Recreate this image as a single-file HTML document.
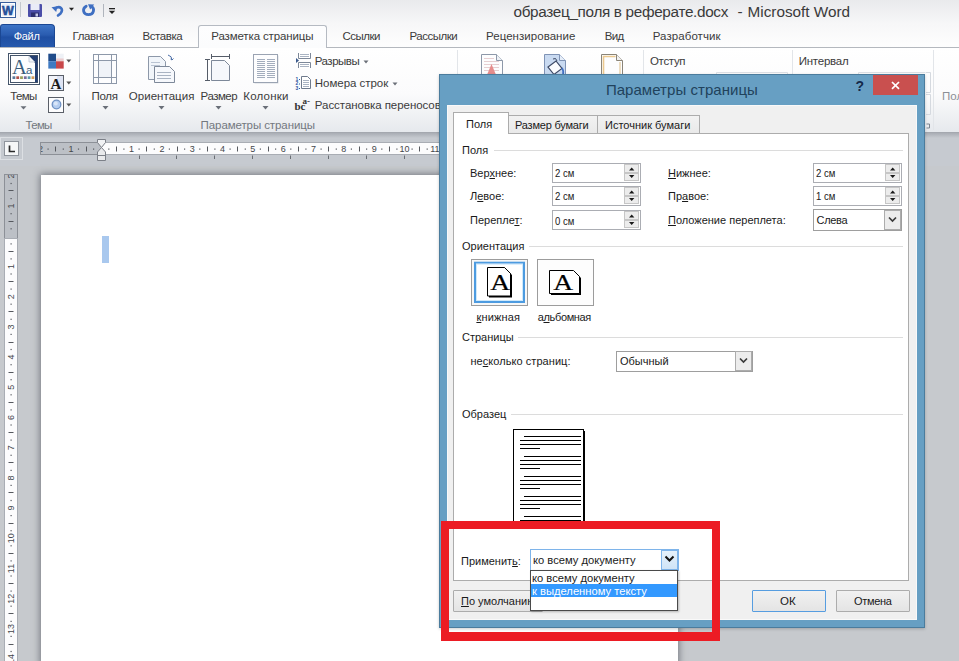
<!DOCTYPE html>
<html lang="ru"><head><meta charset="utf-8"><title>Параметры страницы</title>
<style>
*{box-sizing:border-box;margin:0;padding:0}
html,body{width:959px;height:661px;overflow:hidden;background:#c6c9cd}
body{position:relative;font-family:"Liberation Sans",sans-serif;font-size:11px;color:#1e1e1e}
.a{position:absolute}
.t{position:absolute;white-space:nowrap;line-height:1}
/* ---- word window ---- */
#titlebar{left:0;top:0;width:959px;height:24px;background:linear-gradient(#e9eaec,#f7f7f8)}
#tabrow{left:0;top:24px;width:959px;height:24px;background:linear-gradient(#f7f7f8,#fefefe)}
#ribbon{left:0;top:47px;width:959px;height:86px;background:linear-gradient(#ffffff 0%,#fbfbfc 55%,#e6e9ed 100%);border-top:1px solid #b4b8be;border-bottom:1px solid #a4a8af}
#rulerband{left:0;top:133px;width:959px;height:33px;background:linear-gradient(#a9adb4 0,#c6cad0 5px,#c6cad0 100%)}
#docbg{left:0;top:166px;width:959px;height:495px;background:#c6c9cd}
#page{left:41px;top:175px;width:637px;height:490px;background:#fff;box-shadow:0 0 7px 1px rgba(60,65,75,.6)}
.wt{font-size:15.3px;color:#3a3a3a}
.rt{font-size:11.5px;color:#3b3b3b}
</style></head><body>
<div class="a" id="titlebar"></div>
<div class="a" id="tabrow"></div>
<div class="a" id="ribbon"></div>
<div class="a" id="rulerband"></div>
<div class="a" id="docbg"></div>
<div class="a" id="page"></div>
<!--RIBBON-START-->
<!-- quick access toolbar -->
<svg class="a" style="left:0;top:0" width="120" height="24" viewBox="0 0 120 24">
  <rect x="0.5" y="2.5" width="15" height="15" fill="#e9f0fa" stroke="#3a5f9c"/>
  <rect x="1.5" y="3.5" width="13" height="13" fill="none" stroke="#fff" stroke-width="1"/>
  <text x="8" y="15" font-family="Liberation Sans,sans-serif" font-weight="bold" font-size="12.5" text-anchor="middle" fill="#2a57a5" stroke="#1d4489" stroke-width=".5">W</text>
  <rect x="20" y="2" width="1" height="15" fill="#c4c8ce"/>
  <!-- save -->
  <rect x="28" y="4" width="14" height="13" rx="1" fill="#4b4ea8"/>
  <rect x="30.5" y="4" width="9" height="6" fill="#e9ebf7"/>
  <rect x="31" y="12.5" width="8" height="4.5" fill="#2c2f6e"/>
  <rect x="35.5" y="13.5" width="2.5" height="3" fill="#c6c9ea"/>
  <!-- undo -->
  <path d="M51.5 7.2 L57.5 6.2 L56.2 12 Z" fill="#3f6fc2"/>
  <path d="M55 8.5 C60 5 64 9 60.5 13.5 L58 15.5" fill="none" stroke="#3f6fc2" stroke-width="2.6" stroke-linecap="round"/>
  <path d="M69 7.8 h5 l-2.5 3 z" fill="#222"/>
  <!-- redo -->
  <path d="M86.2 6.2 C82 8.5 82.8 14.5 88.5 14.7 C94 14.5 95 8.5 91.5 6.5" fill="none" stroke="#3f6fc2" stroke-width="2.8" stroke-linecap="round"/>
  <path d="M88 4.2 L94.2 4.6 L90.2 9.6 Z" fill="#3f6fc2"/>
  <rect x="103" y="4" width="1" height="13" fill="#b0b5bd"/>
  <rect x="109" y="8" width="6" height="1.3" fill="#222"/>
  <path d="M108.8 10.8 h6.4 l-3.2 3.2 z" fill="#222"/>
</svg>
<div class="t wt" style="left:513.5px;top:4px;letter-spacing:-.33px" id="wt1">образец_поля в реферате.docx</div>
<div class="t wt" style="left:737.5px;top:4px" id="wt2">-</div>
<div class="t wt" style="left:747.5px;top:4px" id="wt3">Microsoft Word</div>
<!-- tabs -->
<div class="a" style="left:0;top:24px;width:55px;height:23px;border-radius:3px 4px 0 0;background:linear-gradient(#3d74c6 0%,#2a5cb0 45%,#1f4fa3 55%,#2659ad 100%);border:1px solid #1b4793;border-bottom:0"></div>
<div class="t rt" style="left:13.7px;top:31px;color:#fff;font-size:11px;letter-spacing:-0.312px" id="tFile">Файл</div>
<div class="a" style="left:198px;top:25px;width:129px;height:23px;border:1px solid #b5bac2;border-bottom:0;border-radius:3px 3px 0 0;background:linear-gradient(#fdfdfe,#fbfcfd)"></div>
<div class="t rt" style="left:72.5px;top:31px;letter-spacing:-0.369px" id="t1">Главная</div>
<div class="t rt" style="left:142.5px;top:31px;letter-spacing:-0.436px" id="t2">Вставка</div>
<div class="t rt" style="left:211.3px;top:31px;letter-spacing:-0.137px" id="t3">Разметка страницы</div>
<div class="t rt" style="left:342.5px;top:31px;letter-spacing:-0.500px" id="t4">Ссылки</div>
<div class="t rt" style="left:409.5px;top:31px;letter-spacing:-0.491px" id="t5">Рассылки</div>
<div class="t rt" style="left:486px;top:31px;letter-spacing:0.042px" id="t6">Рецензирование</div>
<div class="t rt" style="left:604.7px;top:31px;letter-spacing:-0.604px" id="t7">Вид</div>
<div class="t rt" style="left:652.7px;top:31px;letter-spacing:0.084px" id="t8">Разработчик</div>
<!-- ribbon big buttons -->
<svg class="a" style="left:0;top:48px" width="480" height="86" viewBox="0 48 480 86">
  <!-- Themes icon -->
  <rect x="8.500" y="53.500" width="31" height="31" fill="#fff" stroke="#44546a"/>
  <rect x="10.500" y="55.500" width="27" height="27" fill="#fdfdfe" stroke="#44546a"/>
  <rect x="35" y="56" width="2.500" height="26" fill="#243f73"/>
  <path d="M29 56 h8 v7 h-2 z" fill="#243f73"/>
  <path d="M29 56 v6 h6 z" fill="#f4f6fa" stroke="#9aa6bb" stroke-width=".5"/>
  <text x="12" y="73.700" font-family="Liberation Serif,serif" font-size="20.500" fill="#3b5d7c">A</text>
  <text x="26" y="73.700" font-family="Liberation Sans,sans-serif" font-size="11.500" fill="#3b5d7c">a</text>
  <g><rect x="12.500" y="76.300" width="2.800" height="2.700" fill="#5a7a9a"/><rect x="16.300" y="76.300" width="2.800" height="2.700" fill="#b0504a"/><rect x="20.100" y="76.300" width="2.800" height="2.700" fill="#9aa05a"/><rect x="23.900" y="76.300" width="2.800" height="2.700" fill="#7a6a9a"/><rect x="27.700" y="76.300" width="2.800" height="2.700" fill="#5a9aaa"/><rect x="31.500" y="76.300" width="2.800" height="2.700" fill="#d09a5a"/></g>
  <path d="M20.500 106.300 h6 l-3 3.300 z" fill="#6a6f78"/>
  <!-- small theme icons -->
  <rect x="48.300" y="53.700" width="7.700" height="7.500" fill="#1f4b8a"/><rect x="56" y="53.700" width="7.700" height="7.500" fill="#eef1f6"/>
  <rect x="48.300" y="61.200" width="7.700" height="7.400" fill="#3f7ac2"/><rect x="56" y="61.200" width="7.700" height="7.400" fill="#c8474a"/>
  <rect x="56" y="58.500" width="7.700" height="2.700" fill="#e9b5b5" opacity=".6"/>
  <path d="M66.300 59.500 h5 l-2.500 3 z" fill="#555"/>
  <rect x="48.500" y="75.500" width="15" height="15" fill="#f2f4fa" stroke="#5a5f68"/>
  <rect x="57" y="76" width="6" height="14" fill="#dfe4f3"/>
  <text x="56" y="88.500" font-family="Liberation Serif,serif" font-size="15" font-weight="bold" text-anchor="middle" fill="#1a1a1a">A</text>
  <path d="M66.300 81.500 h5 l-2.500 3 z" fill="#555"/>
  <rect x="48.500" y="97.500" width="15" height="15" fill="#fdfdfe" stroke="#5a5f68"/>
  <circle cx="56.500" cy="104.500" r="4.300" fill="#b4cdf0" stroke="#6f92c4" stroke-width="1.300"/>
  <circle cx="55.800" cy="103.500" r="2" fill="#d9e6f8"/>
  <path d="M66.300 103.500 h5 l-2.500 3 z" fill="#555"/>
  <!-- separators -->
  <rect x="79" y="50" width="1" height="80" fill="#d0d4da"/>
  <rect x="457" y="50" width="1" height="80" fill="#e2e5e9"/>
  <!-- Margins icon -->
  <rect x="93.500" y="54.500" width="23" height="29" fill="#fdfdfe" stroke="#8d98a9"/>
  <path d="M98.500 55 v28 M111.500 55 v28 M94 60.500 h22 M94 77.500 h22" stroke="#8d98a9" fill="none"/>
  <rect x="99" y="61" width="12" height="16" fill="#f0f3f8"/>
  <path d="M102.500 106 h6 l-3 3.500 z" fill="#6a6f78"/>
  <!-- Orientation icon -->
  <path d="M148.500 56.500 h12 l5 5 v18 h-17 z" fill="#f1f5fa" stroke="#8d98a9"/><path d="M151 62.500 h9 M151 65.500 h9" stroke="#b9c3d2"/>
  <path d="M154.500 66.500 h15 l5 5 v11 h-20 z" fill="#f6f8fc" stroke="#7d8899"/>
  <path d="M157 72.500 h14 M157 75.500 h14 M157 78.500 h14" stroke="#a9b3c2"/>
  <path d="M168 55 q4 1 4 5 l-1.500 -1 m1.500 1 l1.500 -1.500" stroke="#4b6ea8" fill="none"/>
  <path d="M158.500 106 h6 l-3 3.500 z" fill="#6a6f78"/>
  <!-- Size icon -->
  <path d="M211.500 60.500 h13 l5 5 v15 h-18 z" fill="#f6f8fc" stroke="#7d8899"/>
  <path d="M207.500 59 v22 M205 59.500 h5 M205 80.500 h5 M211 56.500 h19 M211.500 54 v5 M229.500 54 v5" stroke="#555c68" fill="none"/>
  <path d="M215.500 106 h6 l-3 3.500 z" fill="#6a6f78"/>
  <!-- Columns icon -->
  <rect x="254.500" y="55.500" width="24" height="28" fill="#d5d9e0"/><rect x="253.500" y="54.500" width="24" height="28" fill="#fdfdfe" stroke="#9aa3b2"/>
  <path d="M257 59.500 h8 M267 59.500 h8 M257 61.500 h8 M267 61.500 h8 M257 63.500 h8 M267 63.500 h8 M257 65.500 h8 M267 65.500 h8 M257 67.500 h8 M267 67.500 h8 M257 69.500 h8 M267 69.500 h8 M257 71.500 h8 M267 71.500 h8 M257 73.500 h8 M267 73.500 h8 M257 75.500 h8 M267 75.500 h8 M257 77.500 h8 M267 77.500 h8" stroke="#a3adbd"/>
  <path d="M262.500 106 h6 l-3 3.500 z" fill="#6a6f78"/>
  <!-- Breaks icon -->
  <path d="M298.500 53 v5.500 h12 v-5.500 M298.500 68 v-5.500 h12 v5.500" fill="#fff" stroke="#7d8899"/>
  <path d="M300 54.500 h9 M300 56.500 h9 M300 64.500 h9 M300 66.500 h9" stroke="#a9b3c2"/>
  <path d="M296 58 l3 2.500 l-3 2.500 z" fill="#3b5a8c"/>
  <path d="M363.500 60.500 h5 l-2.500 3 z" fill="#6a6f78"/>
  <!-- Line numbers icon -->
  <path d="M301.500 76.500 h6 l3 3 v9 h-9 z" fill="#fff" stroke="#6f7a8c"/>
  <path d="M303 80.500 h6 M303 82.500 h6 M303 84.500 h6 M303 86.500 h6" stroke="#a9b3c2"/>
  <text x="295.500" y="80.500" font-family="Liberation Sans,sans-serif" font-weight="bold" font-size="5" fill="#2f55a0">1</text>
  <text x="295.500" y="85" font-family="Liberation Sans,sans-serif" font-weight="bold" font-size="5" fill="#2f55a0">2</text>
  <text x="295.500" y="89.500" font-family="Liberation Sans,sans-serif" font-weight="bold" font-size="5" fill="#2f55a0">3</text>
  <path d="M299 79.500 h1 M299 84 h1 M299 88.500 h1" stroke="#2f55a0"/>
  <path d="M392.500 82.500 h5 l-2.500 3 z" fill="#6a6f78"/>
  <!-- Hyphenation icon -->
  <text x="294.500" y="109.500" font-family="Liberation Serif,serif" font-weight="bold" font-size="11" fill="#333">bc</text>
  <text x="302.500" y="103.500" font-family="Liberation Serif,serif" font-weight="bold" font-size="9" fill="#333">a-</text>
</svg>
<div class="t rt" style="left:10.3px;top:90.5px;letter-spacing:-0.638px" id="b1">Темы</div>
<div class="t rt" style="left:25.5px;top:120px;color:#73787f;letter-spacing:-0.688px" id="g1">Темы</div>
<div class="t rt" style="left:91.5px;top:90.5px;letter-spacing:-0.290px" id="b2">Поля</div>
<div class="t rt" style="left:128.8px;top:90.5px;letter-spacing:0.040px" id="b3">Ориентация</div>
<div class="t rt" style="left:200.6px;top:90.5px;letter-spacing:-0.489px" id="b4">Размер</div>
<div class="t rt" style="left:243.3px;top:90.5px;letter-spacing:0.201px" id="b5">Колонки</div>
<div class="t rt" style="left:314.8px;top:56px;letter-spacing:-0.496px" id="s1">Разрывы</div>
<div class="t rt" style="left:314.8px;top:78px;letter-spacing:-0.037px" id="s2">Номера строк</div>
<div class="t rt" style="left:314.8px;top:100px;letter-spacing:-0.048px" id="s3">Расстановка переносов</div>
<div class="t rt" style="left:200.6px;top:120px;color:#73787f;letter-spacing:-0.091px" id="g2">Параметры страницы</div>
<!-- right ribbon part -->
<svg class="a" style="left:458px;top:48px" width="501" height="86" viewBox="458 48 501 86">
  <path d="M481.500 54.500 h15 l6 6 v20 h-21 z" fill="#fdfdfe" stroke="#8d98a9"/>
  <path d="M496.500 54.500 v6 h6" fill="#eef1f6" stroke="#8d98a9"/>
  <path d="M484 58.500 h10 M484 61.500 h15 M484 64.500 h15 M484 67.500 h15 M484 70.500 h15" stroke="#e6cfd2"/>
  <path d="M486.500 76 l5 -12 l5 12 z" fill="#e58d8d"/>
  <path d="M544.500 54.500 h15 l6 6 v20 h-21 z" fill="#c9daf1" stroke="#7f93b5"/>
  <path d="M559.500 54.500 v6 h6" fill="#e6eef9" stroke="#7f93b5"/>
  <path d="M548 67 l8 -6 l6 7.500 l-8 6 z" fill="#fbfcfe" stroke="#3d4a66" stroke-width="1.200"/>
  <path d="M553 59 q3 -2 4 2" fill="none" stroke="#3d4a66"/>
  <path d="M562 68 q2 3 1 7" fill="none" stroke="#3f6fc2" stroke-width="1.600"/>
  <path d="M601.500 54.500 h15 l6 6 v20 h-21 z" fill="#fdfdfe" stroke="#8a8478"/>
  <path d="M616.500 54.500 v6 h6" fill="#f1f1f1" stroke="#8a8478"/>
  <path d="M603.500 76 v-19.500 h12" stroke="#ecc98f" stroke-width="1.600" fill="none"/>
  <path d="M620 62 v14" stroke="#e9d3ae" stroke-width="1.500"/>
  <rect x="643" y="50" width="1" height="80" fill="#e2e5e9"/>
  <rect x="792" y="50" width="1" height="80" fill="#e2e5e9"/>
  <rect x="933" y="50" width="1" height="80" fill="#e2e5e9"/>
  <path d="M926 72.500 h4.500 v20 h-4.500 M926 94.500 h4.500 v20 h-4.500" stroke="#d5d9df" fill="none"/>
  <path d="M716.500 74 v-1.500 h71 v1.500 M858.500 74 v-1.500 h67" stroke="#dde0e5" fill="none"/>
  <path d="M926.500 124 h3 M929.500 124 v4 h-3" stroke="#7d8590" fill="none"/>
</svg>
<div class="t rt" style="left:650px;top:56px;letter-spacing:-0.336px" id="r1">Отступ</div>
<div class="t rt" style="left:798.7px;top:56px;letter-spacing:-0.230px" id="r2">Интервал</div>
<div class="t rt" style="left:942px;top:90.5px;color:#8b8f96" id="r3">Пол</div>
<!--RIBBON-END-->
<!--RULERS-START-->
<svg class="a" style="left:0;top:134px" width="959" height="527" viewBox="0 134 959 527" font-family="Liberation Sans,sans-serif" font-size="9" fill="#44474c">
<defs><clipPath id="hrc"><rect x="41" y="140" width="620" height="18"/></clipPath><clipPath id="vrc"><rect x="3" y="175" width="16" height="500"/></clipPath></defs>
<rect x=".5" y="137.500" width="22" height="22" fill="none" stroke="#dcdfe3"/>
<rect x="4.500" y="141.500" width="14" height="14" fill="#f6f7f8" stroke="#8f949c"/>
<path d="M9.500 145.500 v6 h5.500" stroke="#2b2b2b" stroke-width="1.700" fill="none"/>
<rect x="40.500" y="142.500" width="60" height="12" fill="#bcc0c6" stroke="#8c9097"/>
<rect x="100.500" y="142" width="560" height="13" fill="#fcfcfd"/>
<path d="M100.500 142.500 h560 M100.500 154.500 h560" stroke="#a9adb4" fill="none"/>
<g clip-path="url(#hrc)"><text x="40.5" y="152.300" text-anchor="middle">2</text></g>
<rect x="47.5" y="148.500" width="1.200" height="1.200" fill="#55585e"/>
<rect x="55" y="146.500" width="1" height="5" fill="#55585e"/>
<rect x="62.7" y="148.500" width="1.200" height="1.200" fill="#55585e"/>
<g clip-path="url(#hrc)"><text x="70.9" y="152.300" text-anchor="middle">1</text></g>
<rect x="77.9" y="148.500" width="1.200" height="1.200" fill="#55585e"/>
<rect x="86" y="146.500" width="1" height="5" fill="#55585e"/>
<rect x="93.0" y="148.500" width="1.200" height="1.200" fill="#55585e"/>
<rect x="108.2" y="148.500" width="1.200" height="1.200" fill="#55585e"/>
<rect x="116" y="146.500" width="1" height="5" fill="#55585e"/>
<rect x="123.3" y="148.500" width="1.200" height="1.200" fill="#55585e"/>
<g clip-path="url(#hrc)"><text x="131.5" y="152.300" text-anchor="middle">1</text></g>
<rect x="138.5" y="148.500" width="1.200" height="1.200" fill="#55585e"/>
<rect x="146" y="146.500" width="1" height="5" fill="#55585e"/>
<rect x="153.7" y="148.500" width="1.200" height="1.200" fill="#55585e"/>
<g clip-path="url(#hrc)"><text x="161.9" y="152.300" text-anchor="middle">2</text></g>
<rect x="168.8" y="148.500" width="1.200" height="1.200" fill="#55585e"/>
<rect x="177" y="146.500" width="1" height="5" fill="#55585e"/>
<rect x="184.0" y="148.500" width="1.200" height="1.200" fill="#55585e"/>
<g clip-path="url(#hrc)"><text x="192.2" y="152.300" text-anchor="middle">3</text></g>
<rect x="199.2" y="148.500" width="1.200" height="1.200" fill="#55585e"/>
<rect x="207" y="146.500" width="1" height="5" fill="#55585e"/>
<rect x="214.3" y="148.500" width="1.200" height="1.200" fill="#55585e"/>
<g clip-path="url(#hrc)"><text x="222.5" y="152.300" text-anchor="middle">4</text></g>
<rect x="229.5" y="148.500" width="1.200" height="1.200" fill="#55585e"/>
<rect x="237" y="146.500" width="1" height="5" fill="#55585e"/>
<rect x="244.7" y="148.500" width="1.200" height="1.200" fill="#55585e"/>
<g clip-path="url(#hrc)"><text x="252.8" y="152.300" text-anchor="middle">5</text></g>
<rect x="259.8" y="148.500" width="1.200" height="1.200" fill="#55585e"/>
<rect x="268" y="146.500" width="1" height="5" fill="#55585e"/>
<rect x="275.0" y="148.500" width="1.200" height="1.200" fill="#55585e"/>
<g clip-path="url(#hrc)"><text x="283.2" y="152.300" text-anchor="middle">6</text></g>
<rect x="290.2" y="148.500" width="1.200" height="1.200" fill="#55585e"/>
<rect x="298" y="146.500" width="1" height="5" fill="#55585e"/>
<rect x="305.3" y="148.500" width="1.200" height="1.200" fill="#55585e"/>
<g clip-path="url(#hrc)"><text x="313.5" y="152.300" text-anchor="middle">7</text></g>
<rect x="320.5" y="148.500" width="1.200" height="1.200" fill="#55585e"/>
<rect x="328" y="146.500" width="1" height="5" fill="#55585e"/>
<rect x="335.7" y="148.500" width="1.200" height="1.200" fill="#55585e"/>
<g clip-path="url(#hrc)"><text x="343.8" y="152.300" text-anchor="middle">8</text></g>
<rect x="350.8" y="148.500" width="1.200" height="1.200" fill="#55585e"/>
<rect x="359" y="146.500" width="1" height="5" fill="#55585e"/>
<rect x="366.0" y="148.500" width="1.200" height="1.200" fill="#55585e"/>
<g clip-path="url(#hrc)"><text x="374.2" y="152.300" text-anchor="middle">9</text></g>
<rect x="381.2" y="148.500" width="1.200" height="1.200" fill="#55585e"/>
<rect x="389" y="146.500" width="1" height="5" fill="#55585e"/>
<rect x="396.3" y="148.500" width="1.200" height="1.200" fill="#55585e"/>
<g clip-path="url(#hrc)"><text x="404.5" y="152.300" text-anchor="middle">10</text></g>
<rect x="411.5" y="148.500" width="1.200" height="1.200" fill="#55585e"/>
<rect x="419" y="146.500" width="1" height="5" fill="#55585e"/>
<rect x="426.6" y="148.500" width="1.200" height="1.200" fill="#55585e"/>
<g clip-path="url(#hrc)"><text x="434.8" y="152.300" text-anchor="middle">11</text></g>
<rect x="441.8" y="148.500" width="1.200" height="1.200" fill="#55585e"/>
<rect x="449" y="146.500" width="1" height="5" fill="#55585e"/>
<rect x="457.0" y="148.500" width="1.200" height="1.200" fill="#55585e"/>
<g clip-path="url(#hrc)"><text x="465.2" y="152.300" text-anchor="middle">12</text></g>
<rect x="472.1" y="148.500" width="1.200" height="1.200" fill="#55585e"/>
<rect x="480" y="146.500" width="1" height="5" fill="#55585e"/>
<rect x="487.3" y="148.500" width="1.200" height="1.200" fill="#55585e"/>
<rect x="139" y="155.500" width="1" height="3.500" fill="#6a6e74"/>
<rect x="176" y="155.500" width="1" height="3.500" fill="#6a6e74"/>
<rect x="214" y="155.500" width="1" height="3.500" fill="#6a6e74"/>
<rect x="252" y="155.500" width="1" height="3.500" fill="#6a6e74"/>
<rect x="290" y="155.500" width="1" height="3.500" fill="#6a6e74"/>
<rect x="328" y="155.500" width="1" height="3.500" fill="#6a6e74"/>
<rect x="366" y="155.500" width="1" height="3.500" fill="#6a6e74"/>
<rect x="404" y="155.500" width="1" height="3.500" fill="#6a6e74"/>
<rect x="442" y="155.500" width="1" height="3.500" fill="#6a6e74"/>
<path d="M97.500 139.500 h8 v3 l-4 5 l-4 -5 z" fill="#f1f2f4" stroke="#7c8088"/>
<path d="M97.500 160.500 v-8.500 l4 -4.500 l4 4.500 v8.500 z" fill="#e9eaec" stroke="#7c8088"/>
<path d="M97.500 155.500 h8" stroke="#7c8088"/>
<rect x="4.500" y="174.500" width="13" height="64" fill="#bcc0c6" stroke="#8c9097"/>
<rect x="4.500" y="238.500" width="13" height="430" fill="#fcfcfd" stroke="#a9adb4"/>
<g clip-path="url(#vrc)"><text transform="translate(14.300,175.9) rotate(-90)" text-anchor="middle">2</text></g>
<rect x="10.500" y="182.9" width="1.200" height="1.200" fill="#55585e"/>
<rect x="8.500" y="190" width="5" height="1" fill="#55585e"/>
<rect x="10.500" y="198.0" width="1.200" height="1.200" fill="#55585e"/>
<g clip-path="url(#vrc)"><text transform="translate(14.300,206.1) rotate(-90)" text-anchor="middle">1</text></g>
<rect x="10.500" y="213.1" width="1.200" height="1.200" fill="#55585e"/>
<rect x="8.500" y="221" width="5" height="1" fill="#55585e"/>
<rect x="10.500" y="228.2" width="1.200" height="1.200" fill="#55585e"/>
<rect x="10.500" y="243.3" width="1.200" height="1.200" fill="#55585e"/>
<rect x="8.500" y="251" width="5" height="1" fill="#55585e"/>
<rect x="10.500" y="258.3" width="1.200" height="1.200" fill="#55585e"/>
<g clip-path="url(#vrc)"><text transform="translate(14.300,266.5) rotate(-90)" text-anchor="middle">1</text></g>
<rect x="10.500" y="273.4" width="1.200" height="1.200" fill="#55585e"/>
<rect x="8.500" y="281" width="5" height="1" fill="#55585e"/>
<rect x="10.500" y="288.5" width="1.200" height="1.200" fill="#55585e"/>
<g clip-path="url(#vrc)"><text transform="translate(14.300,296.7) rotate(-90)" text-anchor="middle">2</text></g>
<rect x="10.500" y="303.6" width="1.200" height="1.200" fill="#55585e"/>
<rect x="8.500" y="311" width="5" height="1" fill="#55585e"/>
<rect x="10.500" y="318.7" width="1.200" height="1.200" fill="#55585e"/>
<g clip-path="url(#vrc)"><text transform="translate(14.300,326.9) rotate(-90)" text-anchor="middle">3</text></g>
<rect x="10.500" y="333.8" width="1.200" height="1.200" fill="#55585e"/>
<rect x="8.500" y="342" width="5" height="1" fill="#55585e"/>
<rect x="10.500" y="348.9" width="1.200" height="1.200" fill="#55585e"/>
<g clip-path="url(#vrc)"><text transform="translate(14.300,357.1) rotate(-90)" text-anchor="middle">4</text></g>
<rect x="10.500" y="364.1" width="1.200" height="1.200" fill="#55585e"/>
<rect x="8.500" y="372" width="5" height="1" fill="#55585e"/>
<rect x="10.500" y="379.1" width="1.200" height="1.200" fill="#55585e"/>
<g clip-path="url(#vrc)"><text transform="translate(14.300,387.3) rotate(-90)" text-anchor="middle">5</text></g>
<rect x="10.500" y="394.2" width="1.200" height="1.200" fill="#55585e"/>
<rect x="8.500" y="402" width="5" height="1" fill="#55585e"/>
<rect x="10.500" y="409.3" width="1.200" height="1.200" fill="#55585e"/>
<g clip-path="url(#vrc)"><text transform="translate(14.300,417.5) rotate(-90)" text-anchor="middle">6</text></g>
<rect x="10.500" y="424.4" width="1.200" height="1.200" fill="#55585e"/>
<rect x="8.500" y="432" width="5" height="1" fill="#55585e"/>
<rect x="10.500" y="439.5" width="1.200" height="1.200" fill="#55585e"/>
<g clip-path="url(#vrc)"><text transform="translate(14.300,447.7) rotate(-90)" text-anchor="middle">7</text></g>
<rect x="10.500" y="454.7" width="1.200" height="1.200" fill="#55585e"/>
<rect x="8.500" y="462" width="5" height="1" fill="#55585e"/>
<rect x="10.500" y="469.8" width="1.200" height="1.200" fill="#55585e"/>
<g clip-path="url(#vrc)"><text transform="translate(14.300,477.9) rotate(-90)" text-anchor="middle">8</text></g>
<rect x="10.500" y="484.8" width="1.200" height="1.200" fill="#55585e"/>
<rect x="8.500" y="492" width="5" height="1" fill="#55585e"/>
<rect x="10.500" y="499.9" width="1.200" height="1.200" fill="#55585e"/>
<g clip-path="url(#vrc)"><text transform="translate(14.300,508.1) rotate(-90)" text-anchor="middle">9</text></g>
<rect x="10.500" y="515.0" width="1.200" height="1.200" fill="#55585e"/>
<rect x="8.500" y="523" width="5" height="1" fill="#55585e"/>
<rect x="10.500" y="530.1" width="1.200" height="1.200" fill="#55585e"/>
<g clip-path="url(#vrc)"><text transform="translate(14.300,538.3) rotate(-90)" text-anchor="middle">10</text></g>
<rect x="10.500" y="545.2" width="1.200" height="1.200" fill="#55585e"/>
<rect x="8.500" y="553" width="5" height="1" fill="#55585e"/>
<rect x="10.500" y="560.3" width="1.200" height="1.200" fill="#55585e"/>
<g clip-path="url(#vrc)"><text transform="translate(14.300,568.5) rotate(-90)" text-anchor="middle">11</text></g>
<rect x="10.500" y="575.4" width="1.200" height="1.200" fill="#55585e"/>
<rect x="8.500" y="583" width="5" height="1" fill="#55585e"/>
<rect x="10.500" y="590.5" width="1.200" height="1.200" fill="#55585e"/>
<g clip-path="url(#vrc)"><text transform="translate(14.300,598.7) rotate(-90)" text-anchor="middle">12</text></g>
<rect x="10.500" y="605.6" width="1.200" height="1.200" fill="#55585e"/>
<rect x="8.500" y="613" width="5" height="1" fill="#55585e"/>
<rect x="10.500" y="620.8" width="1.200" height="1.200" fill="#55585e"/>
<g clip-path="url(#vrc)"><text transform="translate(14.300,628.9) rotate(-90)" text-anchor="middle">13</text></g>
<rect x="10.500" y="635.8" width="1.200" height="1.200" fill="#55585e"/>
<rect x="8.500" y="644" width="5" height="1" fill="#55585e"/>
<rect x="10.500" y="650.9" width="1.200" height="1.200" fill="#55585e"/>
<g clip-path="url(#vrc)"><text transform="translate(14.300,659.1) rotate(-90)" text-anchor="middle">14</text></g>
<rect x="10.500" y="666.0" width="1.200" height="1.200" fill="#55585e"/>
<rect x="8.500" y="674" width="5" height="1" fill="#55585e"/>
<rect x="10.500" y="681.1" width="1.200" height="1.200" fill="#55585e"/>
</svg>
<div class="a" style="left:102px;top:236px;width:7px;height:27px;background:#a9c8ee"></div>
<!--RULERS-END-->
<!--DIALOG-START-->
<style>
#dlg{left:439px;top:74px;width:486px;height:554px;background:#679fc3;border:1px solid #4b7c9d;box-shadow:0 1px 3px rgba(0,0,0,.2)}
#dbody{left:447px;top:105px;width:470px;height:515px;background:#f0f0f0;border:1px solid #f9f9f9}
#panel{left:453px;top:133px;width:456px;height:448px;background:#fff;border:1px solid #acacac}
.dt{font-size:11px;color:#1a1a1a;position:absolute;white-space:nowrap;line-height:1}
.tab{position:absolute;border:1px solid #acacac;border-bottom:0;background:linear-gradient(#f2f2f2,#e9e9e9)}
.gl{position:absolute;height:1px;background:#dcdcdc}
.box{position:absolute;background:#fff;border:1px solid #abadb3}
.sp{position:absolute;width:15px;background:linear-gradient(#f3f3f3,#e3e3e3);border:1px solid #b8b8b8}
.btn{position:absolute;border:1px solid #acacac;background:linear-gradient(#f1f1f1,#e4e4e4);border-radius:1px}
u{text-decoration:underline;text-underline-offset:1px}
</style>
<div class="a" id="dlg"></div>
<div class="t" style="left:605.9px;top:82px;font-size:15px;color:#21425c;letter-spacing:0.043px" id="dtitle">Параметры страницы</div>
<div class="t" style="left:855.5px;top:78.5px;font-size:14px;font-weight:bold;color:#14294a" id="dq">?</div>
<div class="a" style="left:873px;top:75px;width:45px;height:20px;background:#c9504f"></div>
<svg class="a" style="left:889px;top:79px" width="12" height="12" viewBox="0 0 12 12"><path d="M3 3 L10 9.800 M10 3 L3 9.800" stroke="#fff" stroke-width="1.700" fill="none"/></svg>
<div class="a" id="dbody"></div>
<div class="tab" style="left:508px;top:115px;width:90px;height:19px"></div>
<div class="tab" style="left:597px;top:115px;width:103px;height:19px"></div>
<div class="a" id="panel"></div>
<div class="tab" style="left:453px;top:112px;width:56px;height:22px;background:#fff"></div>
<div class="dt" style="left:466px;top:119px" id="d_t1">Поля</div>
<div class="dt" style="left:515px;top:120px;letter-spacing:-.2px" id="d_t2">Размер бумаги</div>
<div class="dt" style="left:605px;top:120px" id="d_t3">Источник бумаги</div>
<!-- group: Поля -->
<div class="dt" style="left:462px;top:145px" id="d_g1">Поля</div><div class="gl" style="left:494px;top:150px;width:409px"></div>
<div class="dt" style="left:470px;top:168px" id="d_l1">Вер<u>х</u>нее:</div>
<div class="dt" style="left:470px;top:191px" id="d_l2">Л<u>е</u>вое:</div>
<div class="dt" style="left:470px;top:215px" id="d_l3">Перепле<u>т</u>:</div>
<div class="dt" style="left:668px;top:168px" id="d_l4"><u>Н</u>ижнее:</div>
<div class="dt" style="left:668px;top:191px" id="d_l5">Пр<u>а</u>вое:</div>
<div class="dt" style="left:668px;top:215px" id="d_l6"><u>П</u>оложение переплета:</div>
<div class="box" style="left:552px;top:163px;width:89px;height:20px"></div>
<div class="box" style="left:552px;top:186px;width:89px;height:20px"></div>
<div class="box" style="left:552px;top:210px;width:89px;height:20px"></div>
<div class="box" style="left:813px;top:163px;width:89px;height:20px"></div>
<div class="box" style="left:813px;top:186px;width:89px;height:20px"></div>
<div class="box" style="left:813px;top:209px;width:89px;height:22px;border-color:#9e9e9e"></div>
<div class="dt" style="left:555.3px;top:168px;transform:scaleX(.87);transform-origin:0 50%" id="d_v1">2 см</div>
<div class="dt" style="left:555.3px;top:191px;transform:scaleX(.87);transform-origin:0 50%">2 см</div>
<div class="dt" style="left:555.3px;top:215.5px;transform:scaleX(.87);transform-origin:0 50%">0 см</div>
<div class="dt" style="left:816.3px;top:168px;transform:scaleX(.87);transform-origin:0 50%">2 см</div>
<div class="dt" style="left:816.3px;top:191px;transform:scaleX(.87);transform-origin:0 50%">1 см</div>
<div class="dt" style="left:816.5px;top:215px;letter-spacing:-.3px" id="d_v6">Слева</div>
<svg class="a" style="left:440px;top:100px" width="480" height="520" viewBox="440 100 480 520">
 <defs>
  <g id="spin"><rect x=".5" y=".5" width="14" height="8" fill="#ececec" stroke="#c6c6c6"/><rect x=".5" y="9.500" width="14" height="7" fill="#ececec" stroke="#c6c6c6"/><path d="M5 6.500 h5.400 l-2.700 -3 z M5 11 h5.400 l-2.700 3 z" fill="#1a1a1a"/></g>
  <g id="drop"><rect x=".5" y=".5" width="16" height="19" fill="#ececec" stroke="#acacac"/><path d="M5 7.500 l3.500 3.500 l3.500 -3.500" stroke="#3a3a3a" stroke-width="1.700" fill="none"/></g>
 </defs>
 <use href="#spin" x="624" y="164"/><use href="#spin" x="624" y="187"/><use href="#spin" x="624" y="211"/>
 <use href="#spin" x="885" y="164"/><use href="#spin" x="885" y="187"/>
 <use href="#drop" x="884" y="210"/>
 <!-- orientation buttons -->
 <rect x="471.500" y="259.500" width="56" height="46" fill="#f7f7f7" stroke="#9c9c9c"/>
 <rect x="475" y="262.700" width="49" height="39.300" fill="#fff" stroke="#4d9be0" stroke-width="2"/><rect x="476.500" y="264.200" width="46" height="36.300" fill="none" stroke="#cfe9fb"/>
 <rect x="537.500" y="259.500" width="56" height="46" fill="#fdfdfd" stroke="#9c9c9c"/>
 <path d="M489 269 h17 l6 6 v22.500 h-23 z" fill="#000"/>
 <path d="M487.500 267.500 h17 l6 6 v22.500 h-23 z" fill="#fff" stroke="#000"/>
 <path d="M504.500 267.500 l6 6" fill="none" stroke="#000"/>
 <path d="M551 272 h24 l6 6 v17 h-30 z" fill="#000"/>
 <path d="M549.500 270.500 h24 l6 6 v17 h-30 z" fill="#fff" stroke="#000"/>
 <text transform="translate(500.300,289.600) scale(1.170,1)" text-anchor="middle" font-family="Liberation Serif,serif" font-size="23.500" fill="#000" stroke="#000" stroke-width=".200">A</text>
 <text transform="translate(563.200,289.600) scale(1.170,1)" text-anchor="middle" font-family="Liberation Serif,serif" font-size="23.500" fill="#000" stroke="#000" stroke-width=".200">A</text>
 <!-- preview -->
 <rect x="515" y="431" width="70" height="97" fill="#000"/>
 <rect x="513.500" y="429.500" width="70" height="97" fill="#fff" stroke="#000"/>
 <g stroke="#000" stroke-width="1" id="plines">
  <path d="M524 436.500 h57 M520 440.500 h61 M520 444.500 h61 M520 448.500 h20"/>
  <path d="M524 456.500 h57 M520 460.500 h61 M520 464.500 h61 M520 468.500 h20"/>
  <path d="M524 476.500 h57 M520 480.500 h61 M520 484.500 h61 M520 488.500 h20"/>
  <path d="M524 496.500 h57 M520 500.500 h61 M520 504.500 h61 M520 508.500 h20"/>
  <path d="M524 516.500 h57 M520 520.500 h61"/>
 </g>
</svg>
<div class="dt" style="left:462px;top:241px" id="d_g2">Ориентация</div><div class="gl" style="left:529px;top:246px;width:374px"></div>
<div class="dt" style="left:476.4px;top:311.5px;letter-spacing:0.179px" id="d_o1"><u>к</u>нижная</div>
<div class="dt" style="left:537.7px;top:311.5px;letter-spacing:-0.347px" id="d_o2">а<u>л</u>ьбомная</div>
<div class="dt" style="left:462px;top:332px" id="d_g3">Страницы</div><div class="gl" style="left:518px;top:337px;width:385px"></div>
<div class="dt" style="left:470.4px;top:356px;letter-spacing:.06px" id="d_l7">не<u>с</u>колько страниц:</div>
<div class="box" style="left:616px;top:351px;width:136.500px;height:21px;border-color:#9e9e9e"></div>
<div class="dt" style="left:620px;top:356px" id="d_v7">Обычный</div>
<svg class="a" style="left:735px;top:351px" width="18" height="21"><use href="#drop" x="0" y="0"/></svg>
<div class="dt" style="left:462px;top:409px" id="d_g4">Образец</div><div class="gl" style="left:511px;top:414px;width:392px"></div>
<!-- apply row -->
<div class="dt" style="left:461px;top:556px" id="d_ap">Применит<u>ь</u>:</div>
<div class="box" style="left:530px;top:549px;width:149px;height:22px;border-color:#7eb4ea"></div>
<div class="a" style="left:661px;top:550px;width:17px;height:20px;background:linear-gradient(#e5f1fb,#cfe4f7);border:1px solid #7eb4ea"></div>
<svg class="a" style="left:664px;top:555px" width="11" height="9" viewBox="0 0 11 9"><path d="M1.500 1.500 l4 4 l4 -4" stroke="#111" stroke-width="2" fill="none"/></svg>
<div class="dt" style="left:533px;top:555px;font-size:11.2px" id="d_av">ко всему документу</div>
<!-- buttons -->
<div class="btn" style="left:453px;top:590px;width:90px;height:22px"></div>
<div class="dt" style="left:461px;top:596px" id="d_def"><u>П</u>о умолчанию</div>
<div class="btn" style="left:752px;top:590px;width:74px;height:22px;border-color:#569de0"></div>
<div class="dt" style="left:780px;top:596px;font-size:11.5px" id="d_ok">ОК</div>
<div class="btn" style="left:836px;top:590px;width:74px;height:22px"></div>
<div class="dt" style="left:854px;top:596px;font-size:11px;letter-spacing:-.3px" id="d_cancel">Отмена</div>
<!-- dropdown list -->
<div class="a" style="left:530px;top:570px;width:148px;height:41px;background:#fff;border:1px solid #4a4a4a;box-shadow:1px 1px 2px rgba(0,0,0,.25)"></div>
<div class="a" style="left:531px;top:584px;width:146px;height:12.5px;background:#3399ff"></div>
<div class="dt" style="left:532px;top:573px;font-size:11.2px" id="d_i1">ко всему документу</div>
<div class="dt" style="left:532px;top:586px;font-size:11.2px;color:#fff" id="d_i2">к выделенному тексту</div>
<!--DIALOG-END-->
<!--RED-START-->
<div class="a" style="left:441px;top:521px;width:278.5px;height:120px;border:solid #ec1c24;border-width:8px 8.5px 9px 8px"></div>
<!--RED-END-->
</body></html>
